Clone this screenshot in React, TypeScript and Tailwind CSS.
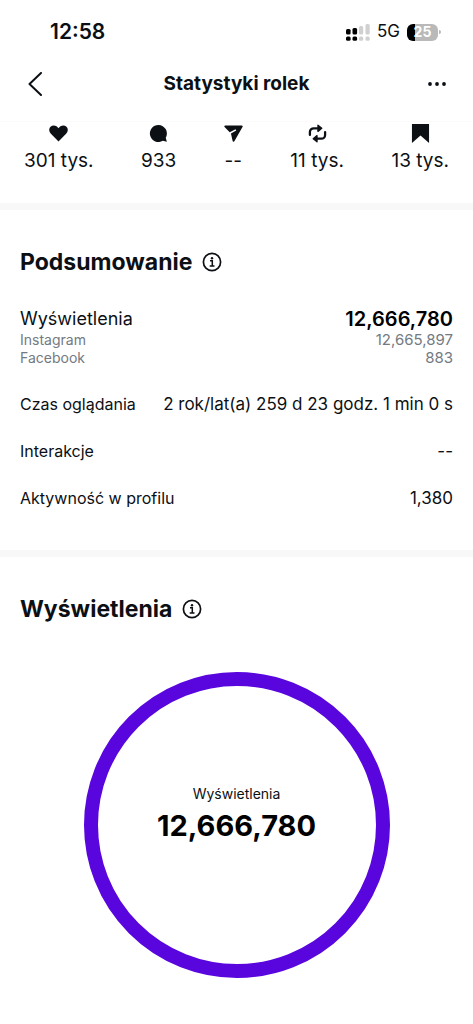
import type { ReactNode } from 'react';

const RING_COLOR = '#5805de';

interface Stat {
  label: string;
  value: string;
  icon: ReactNode;
}

const stats: Stat[] = [
  {
    label: 'Polubienia',
    value: '301 tys.',
    icon: <path d="M10 18.500 2 10.300C-1.800 5.800 1.100 1.500 5 1.500c2.100 0 4 1.100 5 3 1-1.900 2.900-3 5-3 3.900 0 6.800 4.300 3 8.800Z" />,
  },
  {
    label: 'Komentarze',
    value: '933',
    icon: <path d="M10 1a9 9 0 1 0 4.600 16.700l4.200 1.100-1.200-4.200A9 9 0 0 0 10 1Z" />,
  },
  {
    label: 'Udostępnienia',
    value: '--',
    icon: (
      <>
        <path d="M1.300 1.500h17.400a1 1 0 0 1 .9 1.500l-8.700 15.200a1 1 0 0 1-1.800-.3L7.300 10 .6 3.200a1 1 0 0 1 .7-1.700Z" />
        <path d="m6 9.700 6.500-3.500" stroke="#fff" strokeWidth="1.600" />
      </>
    ),
  },
  {
    label: 'Ponowne udostępnienia',
    value: '11 tys.',
    icon: (
      <>
        <g fill="none" stroke="currentColor" strokeWidth="2.400" strokeLinecap="round">
          <path d="M2 11.500V8.500a4 4 0 0 1 4-4h5" />
          <path d="M18 8.500v3a4 4 0 0 1-4 4H9" />
        </g>
        <g stroke="currentColor" strokeWidth="1.400" strokeLinejoin="round">
          <path d="m10.500 1.200 4 3.300-4 3.300Z" />
          <path d="m9.500 12.200-4 3.300 4 3.300Z" />
        </g>
      </>
    ),
  },
  {
    label: 'Zapisane',
    value: '13 tys.',
    icon: <path d="M1 0h18v20l-9-8-9 8Z" />,
  },
];

const rows = [
  { label: 'Czas oglądania', value: '2 rok/lat(a) 259 d 23 godz. 1 min 0 s' },
  { label: 'Interakcje', value: '--' },
  { label: 'Aktywność w profilu', value: '1,380' },
];

function StatusBar() {
  return (
    <div className="flex h-16 items-center justify-between pl-[50px] pr-8">
      <span className="text-[21px] font-semibold">12:58</span>
      <div className="flex items-center gap-[7px]">
        <svg className="h-[17px] w-6" viewBox="0 0 24 17" aria-hidden="true">
          <g fill="#000">
            <rect y="5" width="4.600" height="5.500" rx="1.500" />
            <rect x="6.500" y="4" width="4.600" height="6.500" rx="1.500" />
            <rect y="12.500" width="4.600" height="4.300" rx="1.500" />
            <rect x="6.500" y="12.500" width="4.600" height="4.300" rx="1.500" />
          </g>
          <g fill="#d0d0d0">
            <rect x="13" y="2" width="4.200" height="8.500" rx="1.500" />
            <rect x="19.500" y="0" width="4.200" height="10.500" rx="1.500" />
            <rect x="13" y="12.500" width="4.200" height="4.300" rx="1.500" />
            <rect x="19.500" y="12.500" width="4.200" height="4.300" rx="1.500" />
          </g>
        </svg>
        <span className="text-[17px]">5G</span>
        <div className="flex items-center gap-px">
          <div className="flex h-[17px] w-[31px] items-center justify-center rounded-md bg-linear-to-r from-black from-25% to-[#b9b9b9] to-25% text-sm font-bold text-white">
            25
          </div>
          <div className="h-1 w-0.5 rounded-r-full bg-[#b9b9b9]" />
        </div>
      </div>
    </div>
  );
}

function Header() {
  return (
    <header className="flex h-[58px] items-start justify-between border-b border-[#fbfbfb] px-6 pt-2">
      <button type="button" aria-label="Wstecz" className="flex size-6 items-center justify-center">
        <svg className="h-6 w-4" viewBox="0 0 16 24" fill="none" stroke="currentColor" strokeWidth="2" strokeLinecap="round" strokeLinejoin="round">
          <path d="M13 1 1.500 12 13 23" />
        </svg>
      </button>
      <h1 className="text-[19px]/6 font-bold">Statystyki rolek</h1>
      <button type="button" aria-label="Więcej" className="flex size-6 items-center justify-center">
        <svg className="h-6 w-5" viewBox="0 0 20 24" fill="currentColor">
          <circle cx="3" cy="12" r="1.900" />
          <circle cx="10" cy="12" r="1.900" />
          <circle cx="17" cy="12" r="1.900" />
        </svg>
      </button>
    </header>
  );
}

function SectionTitle({ title }: { title: string }) {
  return (
    <div className="flex items-center gap-2.5">
      <h2 className="text-[23px]/8 font-bold">{title}</h2>
      <button type="button" aria-label={`Informacje: ${title}`}>
        <svg className="size-5" viewBox="0 0 20 20" fill="none" stroke="currentColor" strokeWidth="1.700">
          <circle cx="10" cy="10" r="8.600" />
          <path d="M8 8.800h2.300V14M7.700 14h4.800" strokeWidth="1.500" />
          <circle cx="10" cy="6.200" r="1.200" fill="currentColor" stroke="none" />
        </svg>
      </button>
    </div>
  );
}

export default function App() {
  return (
    <div className="min-h-screen bg-white font-[Inter,sans-serif] text-[#0c1014]">
      <StatusBar />
      <Header />

      <ul className="flex justify-between px-6 pt-0.5 pb-[30px]">
        {stats.map((stat) => (
          <li key={stat.label} className="flex flex-col items-center gap-1.5" aria-label={stat.label}>
            <svg className="size-[19px]" viewBox="0 0 20 20" fill="currentColor" aria-hidden="true">
              {stat.icon}
            </svg>
            <span className="text-[19px]/6">{stat.value}</span>
          </li>
        ))}
      </ul>

      <div className="h-[7px] bg-[#f8f8f8]" />

      <section className="px-5 pt-9 pb-10">
        <SectionTitle title="Podsumowanie" />
        <div className="mt-[29px] flex justify-between text-lg/6">
          <span>Wyświetlenia</span>
          <span className="text-xl/6 font-semibold text-black">12,666,780</span>
        </div>
        <div className="flex justify-between text-sm/[18px] text-[#737a82]">
          <span>Instagram</span>
          <span className="text-[15px]/[18px]">12,665,897</span>
        </div>
        <div className="flex justify-between text-sm/[18px] text-[#737a82]">
          <span>Facebook</span>
          <span className="text-[15px]/[18px]">883</span>
        </div>
        <div className="mt-[25px] space-y-[23px]">
          {rows.map((row) => (
            <div key={row.label} className="flex justify-between text-base/6">
              <span>{row.label}</span>
              <span className="text-[17px]/6">{row.value}</span>
            </div>
          ))}
        </div>
      </section>

      <div className="h-[7px] bg-[#f8f8f8]" />

      <section className="px-5 pt-9 pb-11">
        <SectionTitle title="Wyświetlenia" />
        <div className="relative mx-auto mt-[46px] size-[308px]">
          <svg className="size-full" viewBox="0 0 308 308" fill="none" aria-hidden="true">
            <circle cx="154" cy="154" r="146" stroke={RING_COLOR} strokeWidth="14" />
          </svg>
          <div className="absolute inset-0 flex flex-col items-center justify-center pb-[22px]">
            <span className="text-sm/6">Wyświetlenia</span>
            <span className="text-[29px]/10 font-bold text-black">12,666,780</span>
          </div>
        </div>
      </section>
    </div>
  );
}
